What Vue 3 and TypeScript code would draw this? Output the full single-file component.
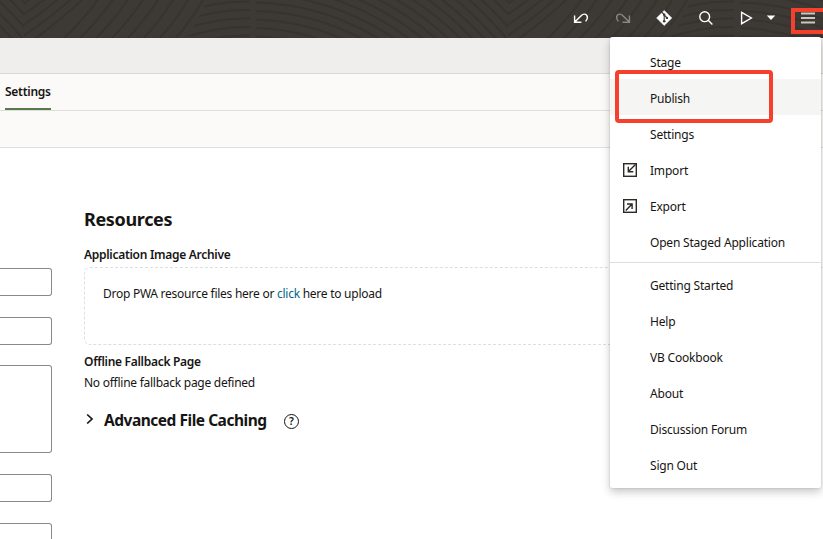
<script setup lang="ts">
interface MenuItem {
  label: string
  icon?: 'import' | 'export'
  active?: boolean
}

const primary: MenuItem[] = [
  { label: 'Stage' },
  { label: 'Publish', active: true },
  { label: 'Settings' },
  { label: 'Import', icon: 'import' },
  { label: 'Export', icon: 'export' },
  { label: 'Open Staged Application' },
]

const secondary: MenuItem[] = [
  { label: 'Getting Started' },
  { label: 'Help' },
  { label: 'VB Cookbook' },
  { label: 'About' },
  { label: 'Discussion Forum' },
  { label: 'Sign Out' },
]

// The header texture repeats horizontally every 484px.
const tiles: number[] = [-484, 0, 484]
</script>

<template>
  <div class="page">
    <header class="topbar">
      <svg class="pattern" width="823" height="38" viewBox="0 0 823 38" fill="none" stroke="#38332f" stroke-width="2">
        <defs>
          <clipPath id="rise"><path d="M24 -2H207L184 40H24Z" /></clipPath>
          <clipPath id="flat"><path d="M209 -2H250V40H186Z" /></clipPath>
          <clipPath id="arc"><rect x="256" y="0" width="252" height="38" /></clipPath>
        </defs>
        <g v-for="t in tiles" :key="t" :transform="`translate(${t} 0)`">
          <g clip-path="url(#rise)">
            <path v-for="i in 6" :key="'v' + i" :d="`M24 ${i * 10.7 - 18}Q54 ${i * 10.7 - 38} 84 ${i * 10.7 - 66}`" />
            <path v-for="i in 9" :key="'d' + i" :d="`M${46 + i * 16} 40Q${68 + i * 15.5} 20 ${84 + i * 15} -2`" />
          </g>
          <g clip-path="url(#flat)">
            <path v-for="i in 7" :key="'e' + i" :d="`M180 ${i * 8.5 + 5}Q215 ${i * 8.5 - 8} 251 ${i * 8.5 - 7}`" />
          </g>
          <g clip-path="url(#arc)">
            <circle v-for="i in 20" :key="'c' + i" cx="250" cy="250" :r="205 + i * 8.5" />
          </g>
        </g>
      </svg>
      <div class="tools">
        <svg class="tool" width="18" height="18" viewBox="0 0 18 18" fill="none" stroke="#fff" stroke-width="1.4">
          <path d="M2.6 6.4v6.8h6.8M3 12.8L9.4 6.4C11 4.8 13.4 4.8 14.6 6.2C16 8 15.6 10 13.6 12.4" />
        </svg>
        <svg class="tool" width="18" height="18" viewBox="0 0 18 18" fill="none" stroke="#8b8784" stroke-width="1.4">
          <path d="M15.4 6.4v6.8h-6.8M15 12.8L8.6 6.4C7 4.8 4.6 4.8 3.4 6.2C2 8 2.4 10 4.4 12.4" />
        </svg>
        <svg class="tool" width="18" height="18" viewBox="0 0 18 18">
          <path d="M9.2 1.4L16.8 9L9.2 16.6L1.6 9Z" fill="#fff" stroke="#fff" stroke-width=".5" stroke-linejoin="round" />
          <path d="M6.6 3L9.2 5.6V12.3M9.2 6L11.8 8.6" fill="none" stroke="#3d3935" stroke-width="1.1" />
          <circle cx="9.2" cy="5.8" r="1.2" fill="#3d3935" />
          <circle cx="9.2" cy="12.3" r="1.3" fill="#3d3935" />
          <circle cx="11.9" cy="8.9" r="1.2" fill="#3d3935" />
        </svg>
        <svg class="tool" width="18" height="18" viewBox="0 0 18 18" fill="none" stroke="#fff" stroke-width="1.4">
          <circle cx="7.7" cy="7.7" r="4.9" /><path d="M11.2 11.2L15.4 15.4" />
        </svg>
        <svg class="tool" width="18" height="18" viewBox="0 0 18 18" fill="none" stroke="#fff" stroke-width="1.4">
          <path d="M3.6 3.3L13.4 9L3.6 14.7Z" />
        </svg>
        <svg class="caret" width="10" height="6" viewBox="0 0 10 6"><path d="M.8 .6h8.4L5 5.1Z" fill="#fff" /></svg>
      </div>
      <div class="burger">
        <svg width="14" height="12" viewBox="0 0 14 12"><path d="M0 1.5h14M0 6h14M0 10.5h14" stroke="#cbc8c0" stroke-width="1.8" /></svg>
      </div>
    </header>
    <div class="subbar"></div>
    <nav class="tabs"><span class="tab">Settings</span></nav>
    <div class="toolbar"></div>

    <main class="body">
      <div class="fields">
        <div class="field"></div>
        <div class="field"></div>
        <div class="field area"></div>
        <div class="field"></div>
        <div class="field"></div>
      </div>
      <section class="content">
        <h2>Resources</h2>
        <div class="label archive">Application Image Archive</div>
        <div class="drop">Drop PWA resource files here or <a>click</a> here to upload</div>
        <div class="label offline">Offline Fallback Page</div>
        <div class="value">No offline fallback page defined</div>
        <div class="advanced">
          <svg width="8" height="12" viewBox="0 0 8 12" fill="none" stroke="#161513" stroke-width="1.7"><path d="M1.2 1.5L6 6L1.2 10.5" /></svg>
          <h3>Advanced File Caching</h3>
          <span class="question">?</span>
        </div>
      </section>
    </main>

    <div class="menu">
      <div v-for="m in primary" :key="m.label" class="item" :class="{ active: m.active }">
        <span class="icon">
          <svg v-if="m.icon" width="14" height="14" viewBox="0 0 14 14" fill="none" stroke="#2b2926" stroke-width="1.4">
            <rect x=".7" y=".7" width="12.6" height="12.6" />
            <path v-if="m.icon === 'import'" d="M12.5 1.5L5.7 8.3M5.3 3.7V8.8H10.3" />
            <path v-else d="M2.8 11.4L8.8 5.3M4 5H9.1V10.1" />
          </svg>
        </span>
        <span class="text">{{ m.label }}</span>
      </div>
      <div class="divider"></div>
      <div v-for="m in secondary" :key="m.label" class="item lower">
        <span class="icon"></span>
        <span class="text">{{ m.label }}</span>
      </div>
    </div>
    <div class="highlight"></div>
  </div>
</template>

<style>
body { margin: 0; overflow: hidden; }
</style>

<style scoped>
.page {
  position: relative;
  width: 823px;
  height: 539px;
  overflow: hidden;
  background: #fff;
  color: #161513;
  font-family: "Noto Sans", "Open Sans", sans-serif;
  font-size: 12px;
  letter-spacing: -.26px;
  white-space: nowrap;
}
.page * { box-sizing: border-box; }
svg { display: block; flex: none; }
.topbar { position: relative; height: 38px; background: #3d3935; display: flex; justify-content: flex-end; }
.pattern { position: absolute; left: 0; top: 0; }
.tools { position: relative; display: flex; align-items: center; height: 36px; padding-right: 15px; }
.tool { margin-right: 23.5px; }
.tool:nth-child(5) { margin-right: 10px; }
.burger {
  position: relative;
  width: 32px;
  height: 26px;
  margin-top: 8px;
  border: 4px solid #f4402c;
  border-right: 0;
  padding: 0 0 0 6px;
}
.subbar { height: 36px; background: #efeeec; border-bottom: 1px solid #dad8d6; }
.tabs { height: 37px; background: #fbfaf8; border-bottom: 1px solid #dfdedc; padding-left: 5px; display: flex; }
.tab { width: 46px; height: 36px; border-bottom: 2px solid #567a48; line-height: 35px; font-weight: 600; }
.toolbar { height: 37px; background: #fbfaf8; border-bottom: 1px solid #e0dfdd; }
.body { display: flex; height: 391px; }
.fields { width: 84px; padding-top: 120px; display: flex; flex-direction: column; gap: 21px; flex: none; }
.field { width: 52px; height: 28px; flex: none; border: 1px solid #8b8987; border-left: 0; border-radius: 0 3px 3px 0; }
.area { height: 88px; margin-top: -1px; }
.content { flex: none; width: 760px; padding-top: 58px; }
h2, h3 { margin: 0; font-weight: 700; }
h2 { font-size: 18px; line-height: 26px; height: 26px; letter-spacing: -.35px; }
h3 { font-size: 15.5px; line-height: 20px; margin-left: 10px; width: 162px; height: 22px; letter-spacing: -.48px; }
.label { font-weight: 600; line-height: 18px; height: 18px; letter-spacing: -.29px; }
.archive { margin-top: 14px; }
.drop { height: 78px; margin-top: 3px; border: 1px dashed #dcdfe2; border-radius: 6px; padding: 17px 18px; line-height: 18px; }
.drop a { color: #00688c; }
.offline { margin-top: 8px; }
.value { line-height: 18px; margin-top: 3px; }
.advanced { display: flex; align-items: center; margin-top: 18px; padding-left: 2px; height: 22px; }
.advanced svg { margin-top: -4px; }
.question {
  width: 15px;
  height: 15px;
  flex: none;
  margin: 1px 0 0 18px;
  border: 1.4px solid #161513;
  border-radius: 50%;
  font-size: 10.5px;
  line-height: 13px;
  font-weight: 600;
  letter-spacing: 0;
  text-align: center;
}
.menu {
  position: absolute;
  left: 610px;
  top: 37px;
  width: 211px;
  height: 451px;
  padding-top: 6px;
  background: #fff;
  border-radius: 2px;
  letter-spacing: -.2px;
  box-shadow: 0 4px 9px rgba(0, 0, 0, .22), 0 0 2px rgba(0, 0, 0, .18);
}
.item { height: 36px; display: flex; align-items: center; line-height: 34px; padding-left: 13px; }
.text { padding-top: 4px; }
.lower .text { padding-top: 2px; }
.active { background: #f5f5f4; }
.icon { width: 27px; flex: none; padding-top: 2px; }
.divider { height: 1px; background: #dfdedd; margin: 3px 0 4px; }
.highlight {
  position: absolute;
  left: 615px;
  top: 70px;
  width: 158px;
  height: 53px;
  border: 4px solid #f4402c;
  border-radius: 4px;
}
</style>
